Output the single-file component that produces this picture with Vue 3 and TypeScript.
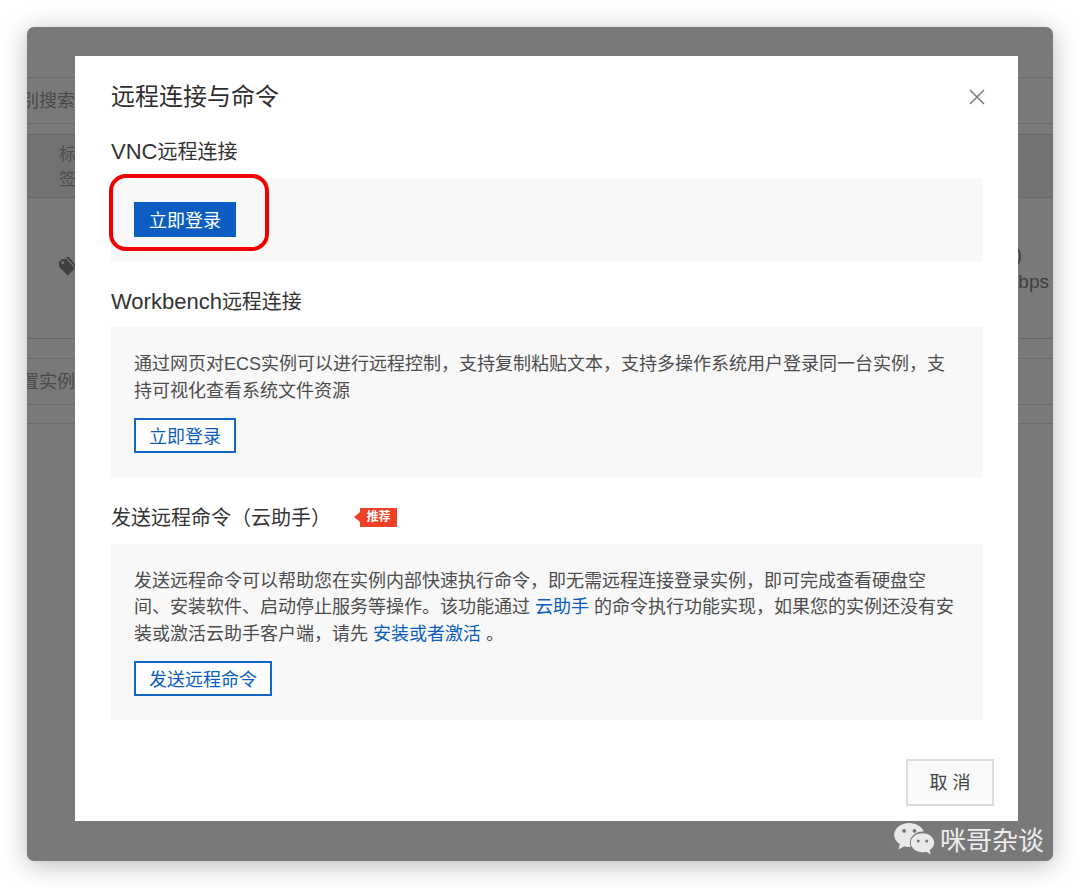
<script setup lang="ts">
interface Section {
  title: string
}
const sections: Section[] = [{ title: '远程连接' }]
</script>

<template>
  <div class="page">
    <div class="window">
      <div class="backdrop">
        <div class="gap-top"></div>
        <div class="search-row"><span>别搜索</span></div>
        <div class="gap-12"></div>
        <div class="table-head"><span class="head-label">标<br />签</span></div>
        <div class="table-row">
          <svg class="tag" viewBox="0 0 20 20" width="20" height="20">
            <path d="M7 1 L11 1 L20 12 L19 13 L10 3 Z" fill="#3f3f3f" />
            <path d="M1 6 L1 10.500 L9.500 19.500 L17 12.500 L8.500 3 L4 3 Z M4.800 5.300 a1.500 1.500 0 1 0 0.010 0 Z" fill="#3f3f3f" fill-rule="evenodd" />
          </svg>
          <div class="row-right"><span>)</span><span>bps</span></div>
        </div>
        <div class="gap-19"></div>
        <div class="action-row"><span>置实例</span></div>
        <div class="gap-rest"></div>
      </div>

      <div class="wechat">
        <svg viewBox="0 0 44 36" width="42" height="34">
          <path d="M17 1C8 1 1 6.500 1 13.500c0 4 2.300 7.500 6 9.800L5.500 29l6.300-3.300c1.700.5 3.400.7 5.200.7h1.500c-.6-1.500-.9-2.900-.9-4.400 0-6.700 6.300-11.900 14-11.900h.8C30.600 5 24.400 1 17 1z" fill="#e9e9e9" />
          <path d="M31 12c-6.900 0-12.400 4.500-12.400 10s5.500 10 12.400 10c1.400 0 2.800-.2 4-.6l4.800 3-1.200-4.800c3-1.900 4.800-4.600 4.800-7.600 0-5.500-5.500-10-12.400-10z" fill="#e9e9e9" />
          <circle cx="11.500" cy="9.500" r="2" fill="#777" />
          <circle cx="22.500" cy="9.500" r="2" fill="#777" />
          <circle cx="26.500" cy="20" r="1.600" fill="#777" />
          <circle cx="35.500" cy="20" r="1.600" fill="#777" />
        </svg>
        <span>咪哥杂谈</span>
      </div>

      <div class="dialog">
        <header class="dialog-head">
          <h1>远程连接与命令</h1>
          <svg class="close" viewBox="0 0 16 16" width="16" height="16">
            <path d="M1 1 L15 15 M15 1 L1 15" stroke="#7b7b7b" stroke-width="1.500" fill="none" />
          </svg>
        </header>

        <section v-for="s in sections" :key="s.title" class="section first">
          <h2><span class="latin">VNC</span>{{ s.title }}</h2>
          <div class="panel panel-vnc">
            <button class="btn primary">立即登录</button>
          </div>
        </section>

        <section class="section second">
          <h2><span class="latin">Workbench</span>远程连接</h2>
          <div class="panel">
            <p>通过网页对ECS实例可以进行远程控制&#xFF0C;支持复制粘贴文本&#xFF0C;支持多操作系统用户登录同一台实例&#xFF0C;支持可视化查看系统文件资源</p>
            <button class="btn outline">立即登录</button>
          </div>
        </section>

        <section class="section third">
          <h2>
            <span>发送远程命令&#xFF08;云助手&#xFF09;</span>
            <span class="badge">推荐</span>
          </h2>
          <div class="panel">
            <p>发送远程命令可以帮助您在实例内部快速执行命令&#xFF0C;即无需远程连接登录实例&#xFF0C;即可完成查看硬盘空间、安装软件、启动停止服务等操作。该功能通过 <a>云助手</a> 的命令执行功能实现&#xFF0C;如果您的实例还没有安装或激活云助手客户端&#xFF0C;请先 <a>安装或者激活</a> 。</p>
            <button class="btn outline">发送远程命令</button>
          </div>
        </section>

        <footer class="dialog-foot">
          <button class="btn cancel">取 消</button>
        </footer>

        <div class="highlight"></div>
      </div>
    </div>
  </div>
</template>

<style>
html, body { margin: 0; background: #fff; }
</style>

<style scoped>
.page {
  width: 1080px;
  height: 888px;
  padding: 27px;
  box-sizing: border-box;
  overflow: hidden;
  font-family: "Liberation Sans", "Noto Sans CJK SC", sans-serif;
}
.window {
  position: relative;
  width: 1026px;
  height: 834px;
  border-radius: 7px;
  background: #797979;
  box-shadow: 0 4px 26px rgba(0, 0, 0, 0.28);
}
.backdrop {
  display: flex;
  flex-direction: column;
  height: 100%;
  overflow: hidden;
  border-radius: 7px;
  color: #4a4a4a;
  font-size: 17px;
}
.gap-top { height: 50px; }
.search-row {
  height: 45px;
  display: flex;
  align-items: center;
  border-top: 1px solid #6a6a6a;
  border-bottom: 1px solid #6a6a6a;
}
.search-row span, .action-row span { font-size: 18px; margin-left: -6px; margin-top: -3px; }
.gap-12 { height: 10px; }
.table-head {
  height: 62px;
  background: #727274;
  border-top: 1px solid #666;
  border-bottom: 1px solid #65686b;
  display: flex;
  align-items: center;
  padding-left: 32px;
}
.head-label { line-height: 25px; color: #4f4f4f; padding-top: 2px; }
.table-row {
  height: 141px;
  display: flex;
  justify-content: space-between;
  border-bottom: 1px solid #666;
  box-sizing: border-box;
  position: relative;
}
.tag { margin: 58px 0 0 31px; }
.row-right {
  display: flex;
  flex-direction: column;
  align-items: flex-end;
  margin: 43px 4px 0 0;
  font-size: 19px;
  line-height: 27px;
  color: #3e3e3e;
}
.row-right span:first-child { margin-right: 27px; }
.gap-19 { height: 19px; }
.action-row {
  height: 45px;
  display: flex;
  align-items: center;
  border-top: 1px solid #6a6a6a;
  border-bottom: 1px solid #6a6a6a;
}
.gap-rest {
  height: 18px;
  border-bottom: 1px solid #6a6a6a;
}

.dialog {
  position: absolute;
  left: 48px;
  top: 29px;
  width: 943px;
  height: 765px;
  box-sizing: border-box;
  padding: 0 35px 0 36px;
  background: #fff;
  display: flex;
  flex-direction: column;
}
.dialog-head {
  height: 80px;
  display: flex;
  align-items: center;
  justify-content: space-between;
}
h1 {
  margin: 0;
  padding-top: 2px;
  font-size: 24px;
  font-weight: 400;
  color: #2f2f2f;
  line-height: 78px;
}
.close { margin-right: -2px; margin-top: 2px; }
h2 {
  margin: 0;
  padding-top: 2px;
  font-size: 20px;
  font-weight: 400;
  line-height: 28px;
  color: #333;
  display: flex;
  align-items: center;
}
.latin { font-size: 22px; }
.section { display: flex; flex-direction: column; }
.first h2 { margin-bottom: 13px; }
.second { margin-top: 25px; }
.second h2 { margin-bottom: 11px; }
.third { margin-top: 25px; }
.third h2 { margin-bottom: 12px; }
.panel {
  background: #f8f8f8;
  padding: 24px 23px 24px;
  box-sizing: border-box;
}
.panel-vnc { height: 82px; padding-top: 23px; }
p {
  margin: 0 0 13.5px;
  font-size: 18px;
  line-height: 26.6px;
  color: #4d4d4d;
}
a { color: #0b5dc1; }
.btn {
  display: block;
  box-sizing: border-box;
  height: 35px;
  padding: 3px 14px 0;
  font-family: inherit;
  font-size: 18px;
  line-height: 29px;
  border-radius: 0;
  cursor: pointer;
}
.primary {
  background: #0b5dc1;
  border: 1px solid #0b5dc1;
  color: #fff;
}
.outline {
  background: #fff;
  border: 2px solid #1466c6;
  color: #0b5dc1;
  padding: 3px 13px 0;
}
.badge {
  position: relative;
  margin-left: 29px;
  width: 37px;
  height: 19px;
  background: #ef4127;
  color: #fff;
  font-size: 12px;
  font-weight: 700;
  line-height: 19px;
  text-align: center;
}
.badge::before {
  content: "";
  position: absolute;
  left: -6px;
  top: 4px;
  border-style: solid;
  border-width: 5.500px 6px 5.500px 0;
  border-color: transparent #ef4127 transparent transparent;
}
.dialog-foot {
  margin-top: auto;
  margin-right: -11px;
  margin-bottom: 15px;
  display: flex;
  justify-content: flex-end;
}
.cancel {
  width: 88px;
  height: 47px;
  padding: 2px 0 0;
  background: #fafafa;
  border: 2px solid #dcdcdc;
  color: #444;
}
.highlight {
  position: absolute;
  left: 34px;
  top: 118px;
  width: 160px;
  height: 77px;
  box-sizing: border-box;
  border: 4px solid #f00000;
  border-radius: 17px;
}
.wechat {
  position: absolute;
  right: 9px;
  bottom: 4px;
  display: flex;
  align-items: center;
  gap: 5px;
  font-family: "Noto Sans CJK SC", sans-serif;
  font-size: 26px;
  line-height: 36px;
  color: #ececec;
}
</style>
